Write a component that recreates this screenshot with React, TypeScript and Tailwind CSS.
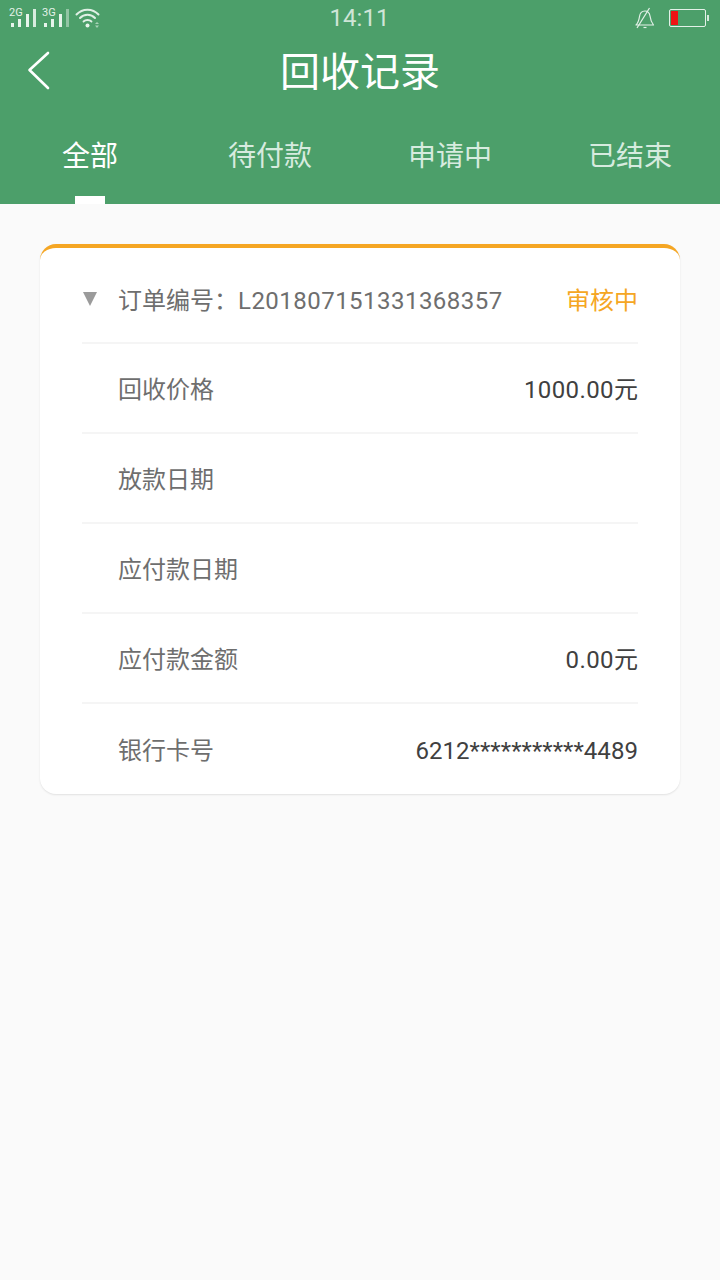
const tabs = ['全部', '待付款', '申请中', '已结束'];

const rows = [
    { label: '回收价格', value: '1000.00', unit: '元', tracking: 'tracking-[0.4px]' },
    { label: '放款日期', value: '', unit: '', tracking: '' },
    { label: '应付款日期', value: '', unit: '', tracking: '' },
    { label: '应付款金额', value: '0.00', unit: '元', tracking: 'tracking-[0.4px]' },
    { label: '银行卡号', value: '6212***********4489', unit: '', tracking: 'tracking-[0.05px]' },
];

function Signal({ label, dim }: { label: string; dim?: boolean }) {
    return (
        <svg width="34" height="26" viewBox="-1 -3 34 26" className="ml-[-1px] block">
            <text x="-1" y="8" fontSize="11" fill="#e3f1e8" fontFamily="Roboto, sans-serif">
                {label}
            </text>
            <rect x="1" y="15" width="3" height="4" fill="#e8f4ec" />
            <rect x="8" y="11" width="3" height="8" fill="#e8f4ec" />
            <rect x="16" y="6" width="3" height="13" fill="#e8f4ec" />
            <rect x="23" y="1" width="3" height="18" fill="#e8f4ec" opacity={dim ? 0.45 : 0.9} />
        </svg>
    );
}

function StatusBar() {
    return (
        <div className="flex h-9 items-center justify-between pl-[10px] pr-[11px]">
            <div className="flex w-[200px] items-center">
                <Signal label="2G" />
                <Signal label="3G" dim />
                <svg width="26" height="20" viewBox="0 0 26 20" className="ml-[-1px] block" fill="none" stroke="#dff0e5" strokeLinecap="round">
                    <path d="M1.5 6.5 C7.5 0 17.5 0 23.5 6.5" strokeWidth="2" />
                    <path d="M5 10 C9 5.5 16 5.5 20 10" strokeWidth="2" />
                    <path d="M8.5 13.5 C10.5 11.5 14.5 11.5 16.5 13.5" strokeWidth="1.8" />
                    <circle cx="12.5" cy="17.5" r="2" fill="#e8f4ec" stroke="none" />
                    <path d="M20 16 L22 14 L24 16 Z M20 17.5 L24 17.5 L22 20 Z" fill="#a9d3b8" stroke="none" />
                </svg>
            </div>
            <span className="text-[24px] leading-none text-[#cfe5d7]">14:11</span>
            <div className="flex w-[200px] items-center justify-end gap-[13px]">
                <svg width="22" height="22" viewBox="0 0 22 22" fill="none" stroke="#e3f1e8" strokeWidth="1.2" strokeLinejoin="round">
                    <path d="M2 18 C4.5 15.5 5 13 5.5 9.5 C6 6 8.5 4 11 4 C13.5 4 15.5 6 16 9 C16.5 13 17.5 15.5 19.5 18 Z" />
                    <path d="M3 21 L15.5 1" />
                    <path d="M9.5 20.5 L12.5 20.5" />
                </svg>
                <div className="flex items-center gap-[1px]">
                    <div className="flex h-[18px] w-[37px] items-center rounded-[2px] border border-[#e3f1e8] pl-[1px]">
                        <div className="h-[14px] w-[7px] bg-[#f01414]" />
                    </div>
                    <div className="h-[6px] w-[2px] bg-[#d5e9dc]" />
                </div>
            </div>
        </div>
    );
}

export default function App() {
    return (
        <div className="flex min-h-[1280px] w-[720px] flex-col bg-[#fafafa] font-['Roboto','Noto_Sans_CJK_SC',sans-serif]">
            {/* Header */}
            <div className="h-[204px] bg-[#4c9f6a]">
                <StatusBar />
                <div className="relative flex h-[72px] items-center justify-center pt-[2px]">
                    <svg width="24" height="40" viewBox="0 0 24 40" fill="none" stroke="#ffffff" strokeWidth="2.6" strokeLinecap="round" strokeLinejoin="round" className="absolute left-[27px] top-[15px]">
                        <path d="M21 2 L2.5 19 L21 37" />
                    </svg>
                    <h1 className="text-[40px] leading-none font-normal text-white">回收记录</h1>
                </div>
                <div className="grid h-[96px] grid-cols-4">
                    {tabs.map((tab, index) => (
                        <div key={tab} className="flex flex-col items-center">
                            <div className={`flex h-[88px] items-center pt-[10px] text-[28px] leading-none ${index === 0 ? 'text-white' : 'text-[#d7ebdf]'}`}>{tab}</div>
                            {index === 0 && <div className="h-[8px] w-[30px] bg-white" />}
                        </div>
                    ))}
                </div>
            </div>

            {/* Card */}
            <div className="px-10 pt-10">
                <div className="rounded-[16px] border-t-4 border-[#f5a623] bg-white px-[42px] shadow-[0_1px_2px_rgba(0,0,0,0.1)]">
                    <div className="flex h-[96px] items-center justify-between border-b-2 border-[#f5f5f5] pt-[16px] pb-[4px]">
                        <div className="flex items-center">
                            <svg width="16" height="14" viewBox="0 0 16 14" className="mb-[5px] mr-[20px]">
                                <path d="M1 0 L15 0 L8 14 Z" fill="#9b9b9b" />
                            </svg>
                            <span className="text-[24px] leading-none text-[#6e6e6e]">
                                订单编号：<span className="tracking-[0.47px]">L201807151331368357</span>
                            </span>
                        </div>
                        <span className="text-[24px] leading-none text-[#f5a623]">审核中</span>
                    </div>
                    {rows.map((row, index) => (
                        <div
                            key={row.label}
                            className={`flex h-[90px] items-center justify-between pl-[36px] pt-[4px] ${index < rows.length - 1 ? 'border-b-2 border-[#f5f5f5]' : ''}`}
                        >
                            <span className="text-[24px] leading-none text-[#6e6e6e]">{row.label}</span>
                            <span className="text-[24px] leading-none text-[#404040]">
                                <span className={row.tracking}>{row.value}</span>
                                {row.unit}
                            </span>
                        </div>
                    ))}
                </div>
            </div>
        </div>
    );
}
